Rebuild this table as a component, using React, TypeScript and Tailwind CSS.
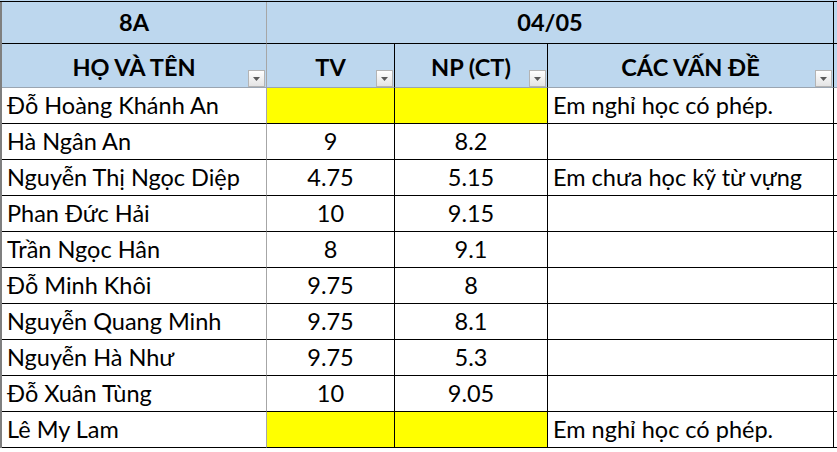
import React from "react";

const rows: [string, string, string, string, boolean][] = [
  ["Đỗ Hoàng Khánh An", "", "", "Em nghỉ học có phép.", true],
  ["Hà Ngân An", "9", "8.2", "", false],
  ["Nguyễn Thị Ngọc Diệp", "4.75", "5.15", "Em chưa học kỹ từ vựng", false],
  ["Phan Đức Hải", "10", "9.15", "", false],
  ["Trần Ngọc Hân", "8", "9.1", "", false],
  ["Đỗ Minh Khôi", "9.75", "8", "", false],
  ["Nguyễn Quang Minh", "9.75", "8.1", "", false],
  ["Nguyễn Hà Như", "9.75", "5.3", "", false],
  ["Đỗ Xuân Tùng", "10", "9.05", "", false],
  ["Lê My Lam", "", "", "Em nghỉ học có phép.", true],
];

function FilterBtn() {
  return (
    <div className="absolute right-px bottom-0 w-[17px] h-[17px] border border-[#b4b4b4] bg-gradient-to-b from-white to-[#e4e4e4] flex items-center justify-center">
      <svg width="7" height="4" viewBox="0 0 7 4">
        <path d="M0 0 L7 0 L3.5 4 Z" fill="#5a5a5a" />
      </svg>
    </div>
  );
}

export default function App() {
  const font = { fontFamily: "Lato, 'Open Sans', sans-serif" };
  return (
    <div className="w-[837px] h-[452px] bg-white overflow-hidden text-black" style={font}>
      <div className="h-px bg-[#bdd7ee]" />
      <div className="grid grid-cols-[2px_265px_128px_153px_286px_3px] border-t border-black">
        {/* row 1 */}
        <div className="bg-[#7f7f7f]" />
        <div className="h-[42px] bg-[#bdd7ee] border-r border-[#a6a6a6] border-b border-b-black flex items-center justify-center font-bold text-[23.5px]">
          8A
        </div>
        <div className="col-span-3 h-[42px] bg-[#bdd7ee] border-r border-black border-b flex items-center justify-center font-bold text-[23.5px]">
          04/05
        </div>
        <div className="bg-[#bdd7ee] border-b border-black" />
        {/* row 2 */}
        <div className="bg-[#7f7f7f]" />
        <div className="relative h-[44px] bg-[#bdd7ee] border-r border-[#a6a6a6] border-b border-b-[#9aa5b1] flex items-center justify-center font-bold text-[23.5px] pt-[4px]">
          HỌ VÀ TÊN
          <FilterBtn />
        </div>
        <div className="relative h-[44px] bg-[#bdd7ee] border-r border-black border-b border-b-[#9aa5b1] flex items-center justify-center font-bold text-[23.5px] pt-[4px]">
          TV
          <FilterBtn />
        </div>
        <div className="relative h-[44px] bg-[#bdd7ee] border-r border-black border-b border-b-[#9aa5b1] flex items-center justify-center font-bold text-[23.5px] pt-[4px]">
          NP (CT)
          <FilterBtn />
        </div>
        <div className="relative h-[44px] bg-[#bdd7ee] border-r border-black border-b border-b-[#9aa5b1] flex items-center justify-center font-bold text-[23.5px] pt-[4px]">
          CÁC VẤN ĐỀ
          <FilterBtn />
        </div>
        <div className="bg-[#bdd7ee] border-b border-[#9aa5b1]" />
        {/* data */}
        {rows.map(([name, tv, np, note, yellow], i) => (
          <React.Fragment key={i}>
            <div className="bg-[#7f7f7f]" />
            <div className="h-[36px] border-r border-[#a6a6a6] border-b border-b-black flex items-center pl-[5px] text-[23.5px] whitespace-nowrap">
              {name}
            </div>
            <div
              className={
                "h-[36px] border-r border-black border-b flex items-center justify-center text-[23.5px] " +
                (yellow ? "bg-[#ffff00]" : "bg-white")
              }
            >
              {tv}
            </div>
            <div
              className={
                "h-[36px] border-r border-black border-b flex items-center justify-center text-[23.5px] " +
                (yellow ? "bg-[#ffff00]" : "bg-white")
              }
            >
              {np}
            </div>
            <div className="h-[36px] border-r border-black border-b flex items-center pl-[5px] text-[23.5px] whitespace-nowrap">
              {note}
            </div>
            <div className="border-b border-black" />
          </React.Fragment>
        ))}
      </div>
    </div>
  );
}
